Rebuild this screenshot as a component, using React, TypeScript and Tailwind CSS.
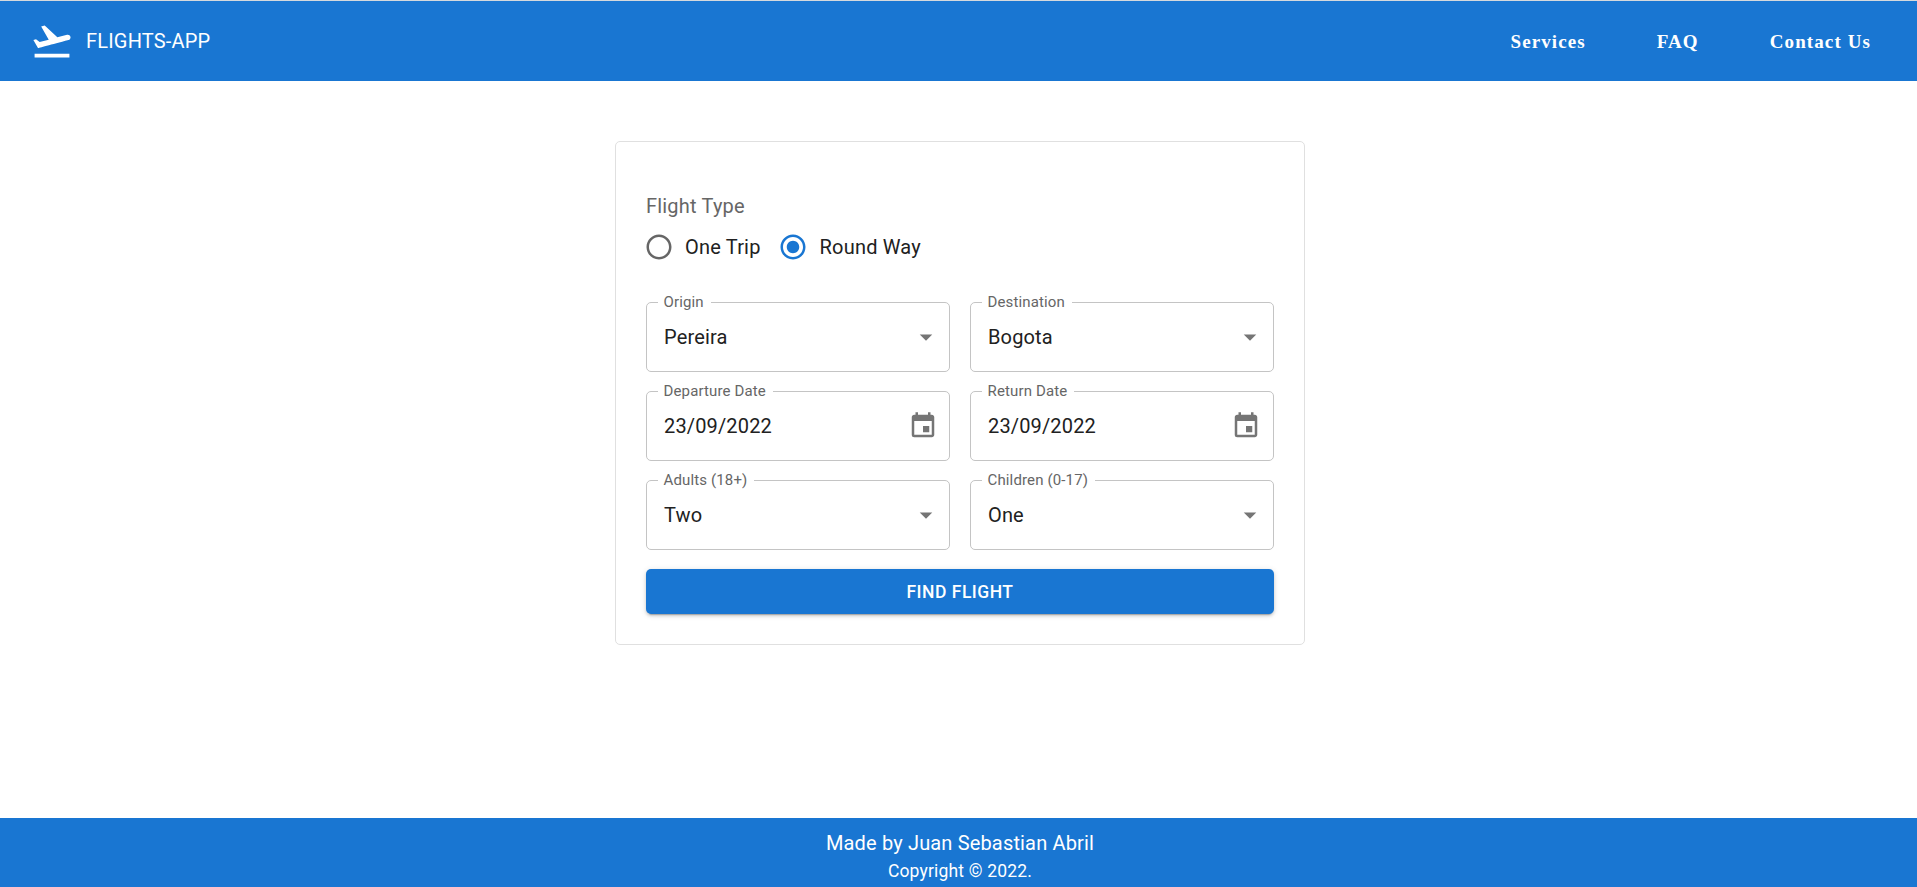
import { MdArrowDropDown, MdEvent, MdFlightTakeoff, MdRadioButtonChecked, MdRadioButtonUnchecked } from "react-icons/md";

type FieldProps = { label: string; value: string; kind: "select" | "date"; iconClass?: string };

function Field({ label, value, kind, iconClass = "mr-[12px]" }: FieldProps) {
  return (
    <div className="relative flex h-[70px] items-center justify-between rounded-[5px] border border-[#c4c4c4] pl-[17px]">
      <span className="absolute -top-[12px] left-[11px] bg-white pr-[7px] pl-[5.5px] text-[15px] leading-[22px] tracking-[0.14px] text-[#666666]">
        {label}
      </span>
      <span className="text-[20px] leading-[29px] tracking-[0.15px] text-[#212121]">{value}</span>
      {kind === "select" ? (
        <MdArrowDropDown className="mr-[8px] size-[30px] text-[#757575]" />
      ) : (
        <MdEvent className={`size-[30px] text-[#757575] ${iconClass}`} />
      )}
    </div>
  );
}

export default function App() {
  return (
    <div className="flex h-[887px] flex-col bg-white font-[Roboto,sans-serif]">
      <header className="flex h-[81px] shrink-0 items-center border-t border-[#d5d9dd] bg-[#1976d2] pr-[46px] pl-[30px] text-white">
        <MdFlightTakeoff className="size-[44px]" />
        <span className="ml-[12px] text-[20px] leading-[30px] tracking-[0.19px]">FLIGHTS-APP</span>
        <nav className="ml-auto flex gap-[71px] pt-[2px] font-['Liberation_Serif',serif] text-[19px] leading-[30px] font-bold tracking-[1.1px]">
          <a>Services</a>
          <a>FAQ</a>
          <a>Contact Us</a>
        </nav>
      </header>

      <main className="flex flex-1 justify-center pt-[60px]">
        <section className="ml-[3px] flex h-[504px] w-[690px] flex-col rounded-[5px] border border-[#e0e0e0] px-[30px] pt-[50px]">
          <div className="text-[20px] leading-[29px] tracking-[0.19px] text-[#666666]">Flight Type</div>
          <div className="mt-[11px] flex h-[30px] items-center text-[20px] leading-[30px] tracking-[0.19px] text-[#212121]">
            <MdRadioButtonUnchecked className="-ml-[2px] size-[30px] text-[#666666]" />
            <span className="ml-[11px]">One Trip</span>
            <MdRadioButtonChecked className="ml-[17px] size-[30px] text-[#1976d2]" />
            <span className="ml-[12px]">Round Way</span>
          </div>
          <div className="mt-[40px] grid grid-cols-2 gap-x-[20px] gap-y-[19px]">
            <Field label="Origin" value="Pereira" kind="select" />
            <Field label="Destination" value="Bogota" kind="select" />
            <Field label="Departure Date" value="23/09/2022" kind="date" iconClass="mr-[11px]" />
            <Field label="Return Date" value="23/09/2022" kind="date" iconClass="mr-[12px]" />
            <Field label="Adults (18+)" value="Two" kind="select" />
            <Field label="Children (0-17)" value="One" kind="select" />
          </div>
          <button className="mt-[19px] h-[45px] rounded-[5px] bg-[#1976d2] text-[17.5px] leading-[30px] font-medium tracking-[0.5px] text-white shadow-[0_4px_1px_-3px_rgba(0,0,0,0.2),0_2px_3px_0_rgba(0,0,0,0.14),0_1px_6px_0_rgba(0,0,0,0.12)]">
            FIND FLIGHT
          </button>
        </section>
      </main>

      <footer className="flex h-[69px] shrink-0 flex-col items-center bg-[#1976d2] pt-[10px] pl-[3px] text-white">
        <p className="text-[20px] leading-[30px] tracking-[0.16px]">Made by Juan Sebastian Abril</p>
        <p className="text-[17.5px] leading-[27px] tracking-[0.18px]">Copyright © 2022.</p>
      </footer>
    </div>
  );
}
